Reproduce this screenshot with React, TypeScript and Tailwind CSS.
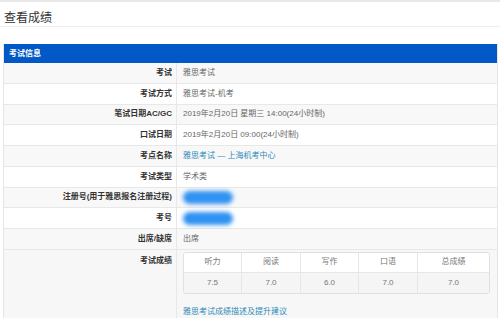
const rows: { label: string; value: string; kind?: "link" | "blur" }[] = [
  { label: "考试", value: "雅思考试" },
  { label: "考试方式", value: "雅思考试-机考" },
  { label: "笔试日期AC/GC", value: "2019年2月20日 星期三 14:00(24小时制)" },
  { label: "口试日期", value: "2019年2月20日 09:00(24小时制)" },
  { label: "考点名称", value: "雅思考试 — 上海机考中心", kind: "link" },
  { label: "考试类型", value: "学术类" },
  { label: "注册号(用于雅思报名注册过程)", value: "", kind: "blur" },
  { label: "考号", value: "", kind: "blur" },
  { label: "出席/缺席", value: "出席" },
];

const scores = [
  { name: "听力", score: "7.5", w: "w-[58px]" },
  { name: "阅读", score: "7.0", w: "w-[59px]" },
  { name: "写作", score: "6.0", w: "w-[58px]" },
  { name: "口语", score: "7.0", w: "w-[59px]" },
  { name: "总成绩", score: "7.0", w: "flex-1" },
];

export default function App() {
  return (
    <div
      className="w-[500px] h-[318px] overflow-hidden bg-white text-[8px] text-[#666]"
      style={{ fontFamily: '"Liberation Sans", "Noto Sans CJK SC", sans-serif' }}
    >
      {/* Page title */}
      <div className="h-[2px] bg-[#e8e8e8]" />
      <div className="h-[25px] flex items-center pl-[4px] pt-[8px] text-[12px] text-[#333] border-b border-[#eeeeee]">
        查看成绩
      </div>

      {/* Panel */}
      <div className="mt-[17px] ml-[3px] w-[495px] border-l border-r border-[#e6e6e6]">
        <div className="h-[19px] bg-[#0258c6] flex items-center pl-[5px] text-white font-bold">
          考试信息
        </div>

        {rows.map((row, i) => (
          <div
            key={row.label}
            className={`flex h-[20.75px] border-b border-[#e8e8e8] ${
              i % 2 === 0 ? "bg-[#f8f8f8]" : "bg-white"
            }`}
          >
            <div className="w-[173px] shrink-0 border-r border-[#e8e8e8] flex items-center justify-end pr-[4px] font-bold text-[#333]">
              {row.label}
            </div>
            <div className="flex-1 flex items-center pl-[6px]">
              {row.kind === "link" ? (
                <span className="text-[#2a8ab8]">{row.value}</span>
              ) : row.kind === "blur" ? (
                <div className="w-[50px] h-[13px] rounded-full bg-[#3092f2] blur-[2px]" />
              ) : (
                row.value
              )}
            </div>
          </div>
        ))}

        {/* Scores */}
        <div className="flex h-[70px] bg-[#f7f7f7]">
          <div className="w-[173px] shrink-0 border-r border-[#e8e8e8] flex justify-end pr-[4px] pt-[5px] font-bold text-[#333]">
            考试成绩
          </div>
          <div className="flex-1 pl-[6px] pt-[2px]">
            <div className="w-[307px] border border-[#e0e0e0] rounded-[3px] overflow-hidden">
              <div className="flex h-[20px] bg-white border-b border-[#e6e6e6]">
                {scores.map((s, i) => (
                  <div
                    key={s.name}
                    className={`${s.w} flex items-center justify-center text-[#777] ${
                      i < scores.length - 1 ? "border-r border-[#e6e6e6]" : ""
                    }`}
                  >
                    {s.name}
                  </div>
                ))}
              </div>
              <div className="flex h-[20px] bg-[#f5f5f5]">
                {scores.map((s, i) => (
                  <div
                    key={s.name}
                    className={`${s.w} flex items-center justify-center text-[#777] ${
                      i < scores.length - 1 ? "border-r border-[#e6e6e6]" : ""
                    }`}
                  >
                    {s.score}
                  </div>
                ))}
              </div>
            </div>
            <div className="mt-[12px] text-[#2a8ab8]">雅思考试成绩描述及提升建议</div>
          </div>
        </div>
      </div>
    </div>
  );
}
